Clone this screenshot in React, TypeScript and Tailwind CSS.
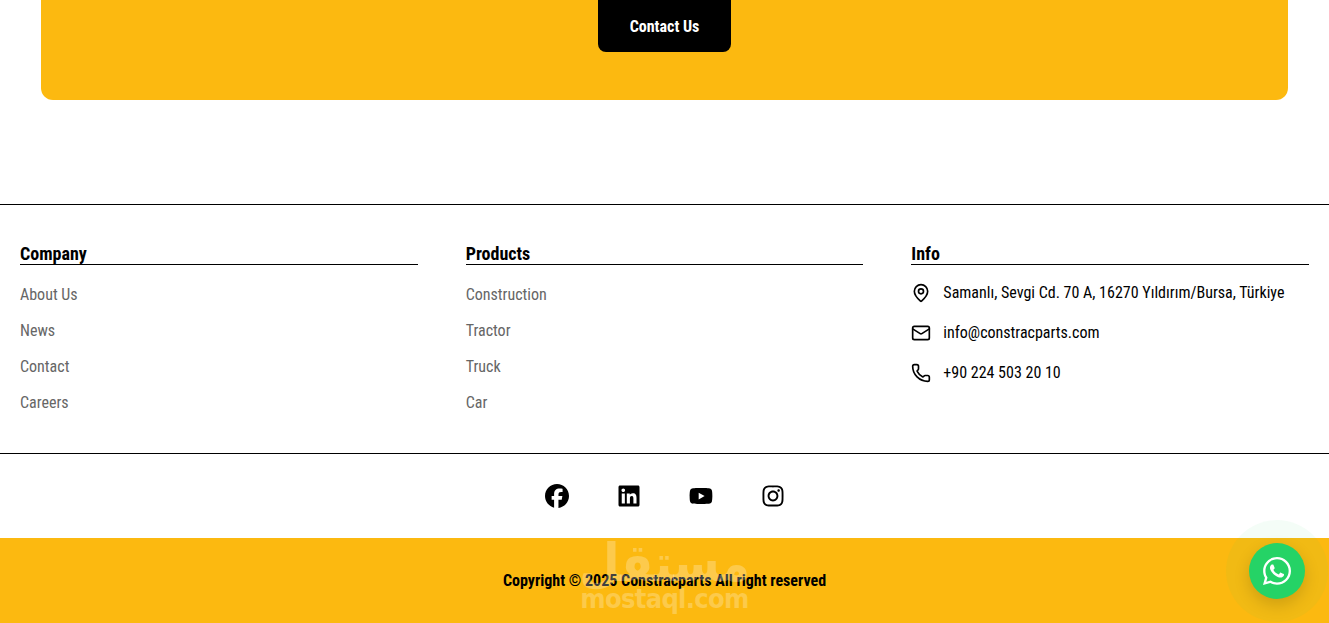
import { FaWhatsapp } from "react-icons/fa";
import { FaFacebook, FaLinkedin, FaYoutube, FaInstagram } from "react-icons/fa6";
import { Mail, MapPin, Phone } from "lucide-react";

const font = { fontStretch: "75%" };

function LinkColumn({ title, links }: { title: string; links: string[] }) {
  return (
    <div>
      <h3 className="border-b border-black text-[18px] leading-[27px] font-bold text-black h-[25px]">{title}</h3>
      <ul className="mt-[18px] flex flex-col gap-3">
        {links.map((l) => (
          <li key={l} className="text-[16px] leading-6 text-[#666666]">{l}</li>
        ))}
      </ul>
    </div>
  );
}

export default function App() {
  return (
    <div className="relative h-[623px] overflow-hidden bg-white font-['Roboto',sans-serif]" style={font}>
      <div className="mx-[41px] h-[100px] rounded-b-xl bg-[#fcb910] flex justify-center overflow-hidden">
        <button className="h-[52px] w-[133px] rounded-b-lg bg-black text-[16px] font-bold text-white pt-[1px]">Contact Us</button>
      </div>
      <footer className="mt-[104px]">
        <div className="border-y border-black h-[250px] px-5 pt-[35px] grid grid-cols-3 gap-12">
          <LinkColumn title="Company" links={["About Us", "News", "Contact", "Careers"]} />
          <LinkColumn title="Products" links={["Construction", "Tractor", "Truck", "Car"]} />
          <div>
            <h3 className="border-b border-black text-[18px] leading-[27px] font-bold text-black h-[25px]">Info</h3>
            <ul className="mt-[16px] flex flex-col gap-4 text-[16px] leading-6 text-black">
              <li className="flex items-center gap-3"><MapPin size={20} strokeWidth={2} />Samanlı, Sevgi Cd. 70 A, 16270 Yıldırım/Bursa, Türkiye</li>
              <li className="flex items-center gap-3"><Mail size={20} strokeWidth={2} />info@constracparts.com</li>
              <li className="flex items-center gap-3"><Phone size={20} strokeWidth={2} />+90 224 503 20 10</li>
            </ul>
          </div>
        </div>
        <div className="h-[84px] flex items-center justify-center gap-12 text-black">
          <FaFacebook size={24} />
          <FaLinkedin size={24} />
          <FaYoutube size={24} />
          <FaInstagram size={24} />
        </div>
        <div className="relative h-[85px] bg-[#fcb910] flex items-center justify-center">
          <p className="text-[16px] font-bold text-black">Copyright © 2025 Constracparts All right reserved</p>
          <div className="absolute left-[584px] top-0 w-[161px] flex flex-col items-center text-white/25 font-bold">
            <span className="text-[52px] leading-[50px] font-['DejaVu_Sans',sans-serif]" dir="rtl">مستقل</span>
            <span className="text-[27px] leading-[22px] font-['DejaVu_Sans',sans-serif] tracking-tight">mostaql.com</span>
          </div>
        </div>
      </footer>
      <div className="absolute left-[1226px] top-[520px] size-[102px] rounded-full bg-[#25d366]/5" />
      <div className="absolute left-[1249px] top-[543px] size-14 rounded-full bg-[#25d366] flex items-center justify-center text-white shadow-[0_6px_16px_rgba(0,0,0,0.15)]">
        <FaWhatsapp size={32} />
      </div>
    </div>
  );
}
